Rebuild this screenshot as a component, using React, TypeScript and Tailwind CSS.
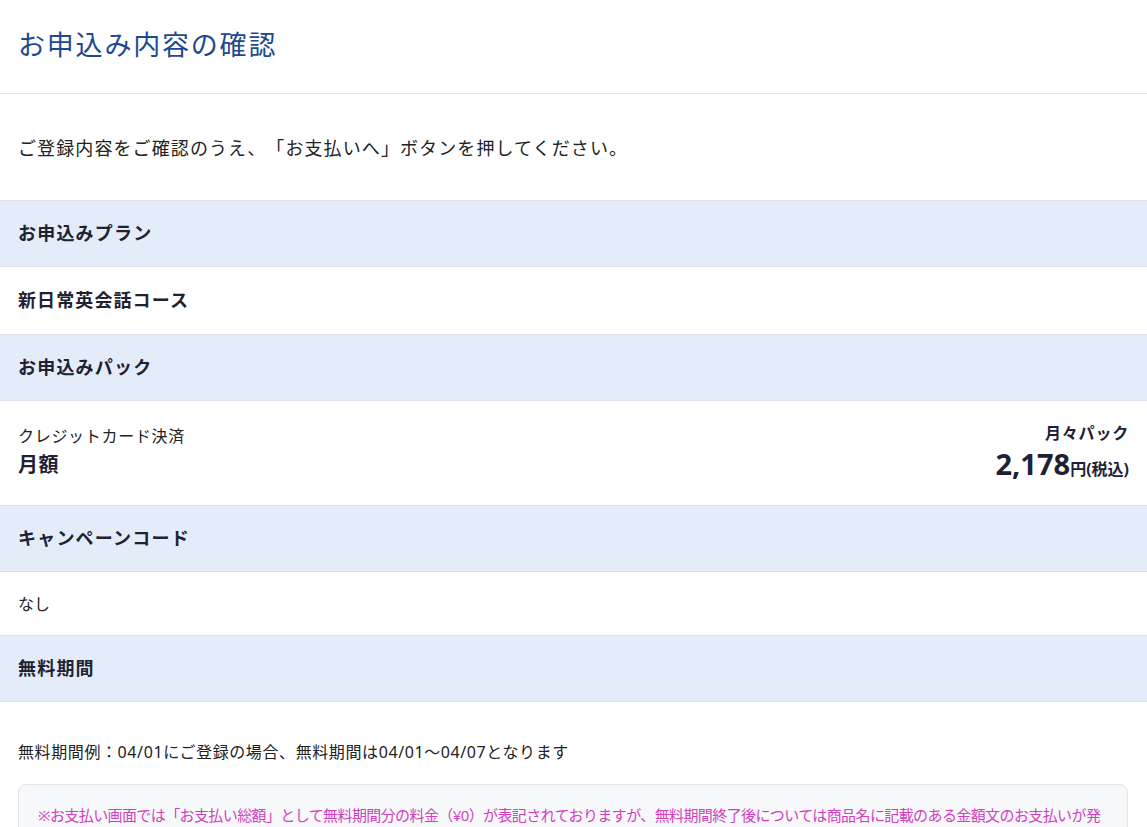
import React from 'react';

const font = { fontFamily: '"Noto Sans", "Noto Sans CJK JP", sans-serif' };

const Band: React.FC<{ children: React.ReactNode }> = ({ children }) => (
  <div className="h-[67px] flex items-center px-[18px] bg-[#e3ecf8] border-y border-[#d9e1ea] text-[18px] font-bold tracking-[1.2px] text-[#1f2233]">
    {children}
  </div>
);

const App: React.FC = () => {
  return (
    <div className="h-screen overflow-hidden bg-white text-[#1f2233] [text-spacing-trim:space-all]" style={font}>
      <header className="h-[94px] flex items-center px-[18px] border-b border-[#e2e4e8]">
        <h1 className="text-[27px] tracking-[1.8px] text-[#1d4a8e] leading-none -mt-[4px]">お申込み内容の確認</h1>
      </header>

      <p className="px-[18px] pt-[41px] pb-[39px] text-[18px] leading-[26px] tracking-[1.1px] text-[#222]">
        ご登録内容をご確認のうえ、「お支払いへ」ボタンを押してください。
      </p>

      <Band>お申込みプラン</Band>
      <div className="h-[67px] flex items-center px-[18px] text-[18px] font-bold tracking-[1.1px]">新日常英会話コース</div>

      <Band>お申込みパック</Band>
      <div className="h-[104px] flex items-center justify-between px-[18px]">
        <div className="flex flex-col mt-[2px]">
          <span className="text-[16px] leading-[22px] tracking-[0.7px] text-[#222]">クレジットカード決済</span>
          <span className="text-[20px] leading-[36px] font-bold tracking-[0.5px]">月額</span>
        </div>
        <div className="flex flex-col items-end mt-[4px]">
          <span className="text-[16px] leading-[22px] font-bold tracking-[0.8px]">月々パック</span>
          <span className="font-bold leading-[40px]">
            <span className="text-[29px]">2,178</span>
            <span className="text-[16px]">円(税込)</span>
          </span>
        </div>
      </div>

      <Band>キャンペーンコード</Band>
      <div className="h-[63px] flex items-center px-[18px] text-[16px] text-[#222]">なし</div>

      <Band>無料期間</Band>
      <div className="px-[18px] pt-[38px]">
        <p className="text-[16px] leading-[24px] tracking-[0.6px] text-[#222]">
          無料期間例：04/01にご登録の場合、無料期間は04/01〜04/07となります
        </p>
        <div className="mt-[20px] mr-[1px] rounded-[8px] border border-[#e4e6ea] bg-[#f7f8fa] px-[19px] pt-[18px] pb-[18px]">
          <p className="text-[15px] leading-[24px] tracking-[-0.6px] text-[#d13fbf]">
            ※お支払い画面では「お支払い総額」として無料期間分の料金（¥0）が表記されておりますが、無料期間終了後については商品名に記載のある金額文のお支払いが発生いたします。
          </p>
        </div>
      </div>
    </div>
  );
};

export default App;
